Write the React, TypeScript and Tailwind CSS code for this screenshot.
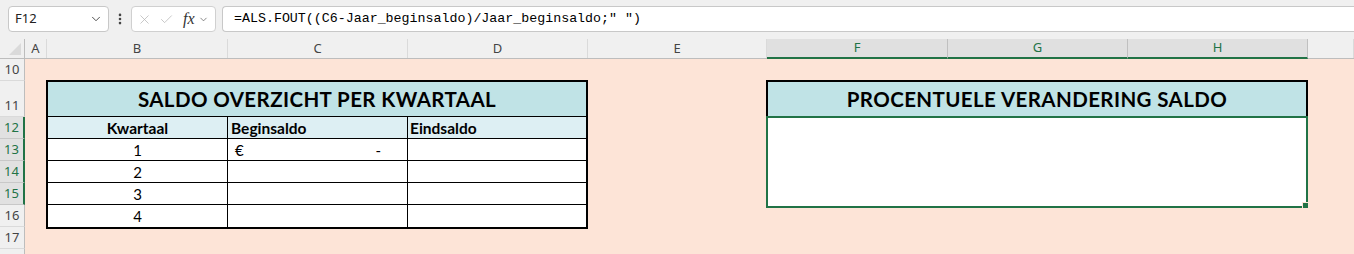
import { ChevronDown, EllipsisVertical, X, Check } from "lucide-react";

const columns = [
  { label: "A", width: "w-[22px]", selected: false },
  { label: "B", width: "w-[181px]", selected: false },
  { label: "C", width: "w-[180px]", selected: false },
  { label: "D", width: "w-[180px]", selected: false },
  { label: "E", width: "w-[179px]", selected: false },
  { label: "F", width: "w-[181px]", selected: true },
  { label: "G", width: "w-[180px]", selected: true },
  { label: "H", width: "w-[180px]", selected: true },
  { label: "", width: "w-[46px]", selected: false },
];

const rows = [
  { n: 10, height: "h-[22px]", selected: false, label: true },
  { n: 11, height: "h-[36px]", selected: false, label: true },
  { n: 12, height: "h-[22px]", selected: true, label: true },
  { n: 13, height: "h-[22px]", selected: true, label: true },
  { n: 14, height: "h-[22px]", selected: true, label: true },
  { n: 15, height: "h-[22px]", selected: true, label: true },
  { n: 16, height: "h-[22px]", selected: false, label: true },
  { n: 17, height: "h-[22px]", selected: false, label: true },
  { n: 18, height: "h-[22px]", selected: false, label: false },
];

function FormulaBar() {
  return (
    <div className="flex h-[38px] items-start bg-[#f0f0f0] pt-[6px]">
      <div className="ml-[8px] flex h-[26px] w-[101px] items-center justify-between rounded-[4px] border border-[#c8c8c8] bg-white pl-[6px] pr-[5px] text-[13px] text-[#222]">
        <span>F12</span>
        <ChevronDown size={14} strokeWidth={1.6} className="text-[#444]" />
      </div>
      <div className="flex h-[26px] w-[22px] items-center justify-center text-[#444]">
        <EllipsisVertical size={14} strokeWidth={2.5} />
      </div>
      <div className="flex h-[26px] w-[85px] items-center rounded-[4px] border border-[#d0d0d0] bg-white pl-[5px] text-[#b5b5b5]">
        <X size={15} strokeWidth={1.2} />
        <Check size={15} strokeWidth={1.2} className="ml-[7px]" />
        <span className="ml-[9px] font-['Liberation_Serif',serif] text-[16px] italic leading-none text-[#333]">fx</span>
        <ChevronDown size={11} strokeWidth={1.5} className="ml-[3px] text-[#555]" />
      </div>
      <div className="ml-[6px] flex h-[26px] flex-1 items-center rounded-l-[4px] border border-r-0 border-[#c8c8c8] bg-white pl-[11px] font-['Liberation_Mono',monospace] text-[13.3px] text-black">
        =ALS.FOUT((C6-Jaar_beginsaldo)/Jaar_beginsaldo;" ")
      </div>
    </div>
  );
}

function ColumnHeaders() {
  return (
    <div className="flex h-[21px] border-b border-[#bdbdbd] bg-[#f0f0f0] pt-[1px]">
      <div className="relative w-[25px] border-r border-[#bdbdbd]">
        <div className="absolute bottom-[3px] right-[3px] h-0 w-0 border-b-[12px] border-l-[12px] border-b-[#dadada] border-l-transparent" />
      </div>
      {columns.map((col) =>
        col.selected ? (
          <div
            key={col.label}
            className={`${col.width} -mb-[1px] flex items-center justify-center border-r border-b-2 border-r-[#c0c0c0] border-b-[#217346] bg-[#e0e0e0] text-[13px] text-[#217346]`}
          >
            {col.label}
          </div>
        ) : (
          <div
            key={col.label || "rest"}
            className={`${col.width} flex items-center justify-center border-r border-[#dadada] text-[13px] text-[#444]`}
          >
            {col.label}
          </div>
        )
      )}
    </div>
  );
}

function RowHeaders() {
  return (
    <div className="flex w-[25px] shrink-0 flex-col bg-[#f0f0f0]">
      {rows.map((row) => (
        <div
          key={row.n}
          className={`${row.height} flex shrink-0 items-end justify-center border-b pb-[1px] text-[13px] ${
            row.selected
              ? "border-b-[#c8c8c8] border-r-2 border-r-[#217346] bg-[#e1e1e1] text-[#217346]"
              : "border-b-[#dadada] border-r border-r-[#bdbdbd] text-[#444]"
          }`}
        >
          {row.label ? row.n : null}
        </div>
      ))}
    </div>
  );
}

function SaldoTable() {
  const quarters = ["1", "2", "3", "4"];
  return (
    <div className="w-[542px] shrink-0 border-2 border-black bg-white font-['Lato',sans-serif] text-black">
      <div className="flex h-[35px] items-center justify-center border-b border-black bg-[#c0e3e6] text-[20.5px] font-bold tracking-[0.4px]">
        SALDO OVERZICHT PER KWARTAAL
      </div>
      <div className="grid h-[22px] grid-cols-[180px_180px_1fr] border-b border-black bg-[#ddeff3] text-[15.5px] font-bold">
        <div className="flex items-center justify-center border-r border-black">Kwartaal</div>
        <div className="flex items-center border-r border-black pl-[3px]">Beginsaldo</div>
        <div className="flex items-center pl-[2px]">Eindsaldo</div>
      </div>
      {quarters.map((q, i) => (
        <div
          key={q}
          className={`grid h-[22px] grid-cols-[180px_180px_1fr] text-[15px] ${
            i < quarters.length - 1 ? "border-b border-black" : ""
          }`}
        >
          <div className="flex items-center justify-center border-r border-black">{q}</div>
          <div className="flex items-center justify-between border-r border-black pl-[7px] pr-[26px]">
            {i === 0 ? (
              <>
                <span>€</span>
                <span>-</span>
              </>
            ) : null}
          </div>
          <div />
        </div>
      ))}
    </div>
  );
}

function ProcentTable() {
  return (
    <div className="w-[542px] shrink-0 font-['Lato',sans-serif] text-black">
      <div className="flex h-[36px] items-center justify-center border-2 border-b-0 border-black bg-[#c0e3e6] text-[20.5px] font-bold tracking-[0.4px]">
        PROCENTUELE VERANDERING SALDO
      </div>
      <div className="relative h-[92px] border-2 border-[#217346] bg-white">
        <div className="absolute -bottom-[3px] -right-[3px] h-[7px] w-[7px] border border-[#fde4d7] bg-[#217346]" />
      </div>
    </div>
  );
}

export default function App() {
  return (
    <div className="h-[254px] w-[1354px] overflow-hidden bg-[#f0f0f0] font-['Noto_Sans',sans-serif]">
      <FormulaBar />
      <ColumnHeaders />
      <div className="flex">
        <RowHeaders />
        <div className="flex flex-1 items-start gap-[178px] bg-[#fde4d7] pl-[21px] pt-[21px]">
          <SaldoTable />
          <ProcentTable />
        </div>
      </div>
    </div>
  );
}
